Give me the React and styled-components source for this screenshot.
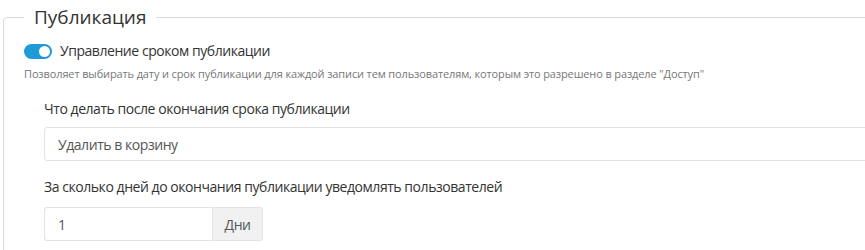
import React from "react"
import styled, { createGlobalStyle } from "styled-components"

const GlobalStyle = createGlobalStyle`
  body {
    margin: 0;
    overflow: hidden;
    background: #fff;
    font-family: "Open Sans", "Noto Sans", sans-serif;
    color: #333;
  }
`

const Fieldset = styled.fieldset`
  margin: 6px 0 0 3px;
  padding: 0 0 30px 20px;
  width: 1000px;
  border: 1px solid #dcdcdc;
  border-radius: 4px;
  box-sizing: border-box;
`
const Legend = styled.legend`
  padding: 0 10px;
  font-size: 19px;
  line-height: 23px;
  color: #333;
`
const SwitchRow = styled.label`
  display: flex;
  align-items: center;
  gap: 8px;
  margin-top: 12px;
  font-size: 14px;
  line-height: 20px;
  letter-spacing: -0.45px;
  color: #333;
`
const Switch = styled.span`
  position: relative;
  width: 28px;
  height: 15px;
  border-radius: 8px;
  background: ${props => (props.on ? "#1e9ad6" : "#ccc")};
  flex: none;

  &::after {
    content: "";
    position: absolute;
    top: 2px;
    left: ${props => (props.on ? "15px" : "2px")};
    width: 11px;
    height: 11px;
    border-radius: 50%;
    background: #fff;
  }
`
const Help = styled.div`
  margin-top: 5px;
  font-size: 11px;
  line-height: 16px;
  letter-spacing: -0.13px;
  color: #777;
`
const Group = styled.div`
  padding-left: 20px;
  margin-top: 17px;
  font-size: 14px;
  letter-spacing: -0.45px;
`
const Field = styled.div`
  & + & {
    margin-top: 16px;
  }
`
const Label = styled.div`
  line-height: 20px;
  color: #333;
  margin-bottom: ${props => props.gap || 8}px;
`
const Select = styled.div`
  height: 34px;
  box-sizing: border-box;
  border: 1px solid #e3e3e3;
  border-radius: 3px;
  padding: 0 13px;
  display: flex;
  align-items: center;
  color: #555;
`
const InputGroup = styled.div`
  display: flex;
  height: 34px;
`
const Input = styled.div`
  width: 168px;
  box-sizing: border-box;
  border: 1px solid #e3e3e3;
  border-right: none;
  border-radius: 3px 0 0 3px;
  padding: 0 13px;
  display: flex;
  align-items: center;
  color: #555;
`
const Addon = styled.div`
  width: 51px;
  box-sizing: border-box;
  border: 1px solid #e3e3e3;
  border-radius: 0 3px 3px 0;
  background: #f1f1f1;
  display: flex;
  align-items: center;
  justify-content: center;
  color: #555;
`

export default function App() {
  return (
    <>
      <GlobalStyle />
      <Fieldset>
        <Legend>Публикация</Legend>
        <SwitchRow>
          <Switch on />
          Управление сроком публикации
        </SwitchRow>
        <Help>
          Позволяет выбирать дату и срок публикации для каждой записи тем пользователям, которым это разрешено в разделе "Доступ"
        </Help>
        <Group>
          <Field>
            <Label>Что делать после окончания срока публикации</Label>
            <Select>Удалить в корзину</Select>
          </Field>
          <Field>
            <Label gap={10}>За сколько дней до окончания публикации уведомлять пользователей</Label>
            <InputGroup>
              <Input>1</Input>
              <Addon>Дни</Addon>
            </InputGroup>
          </Field>
        </Group>
      </Fieldset>
    </>
  )
}
